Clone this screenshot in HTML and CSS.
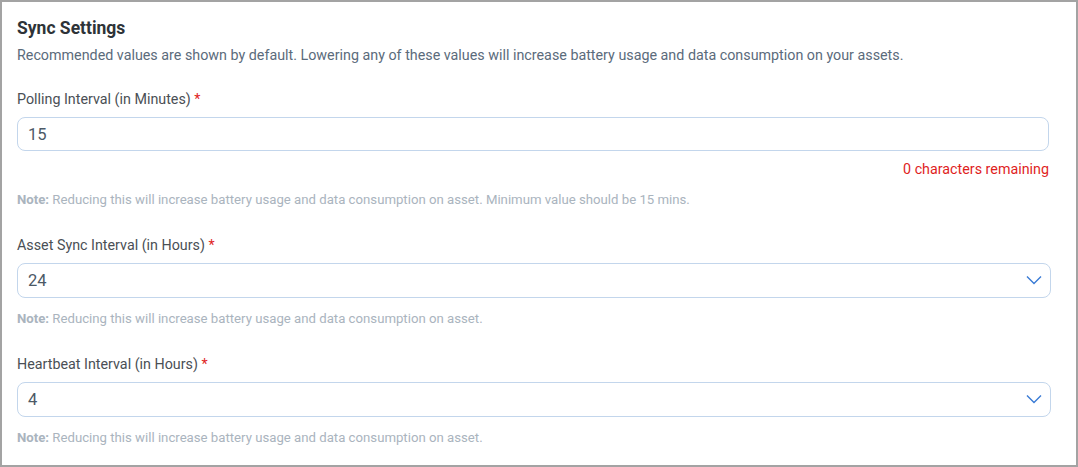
FILE: index.html
```html
<!DOCTYPE html>
<html>
<head>
<meta charset="utf-8">
<link rel="stylesheet" href="styles.css">
</head>
<body>
<div class="panel">
  <h2 class="title">Sync Settings</h2>
  <p class="desc">Recommended values are shown by default. Lowering any of these values will increase battery usage and data consumption on your assets.</p>

  <div class="field">
    <label class="label">Polling Interval (in Minutes) <span class="req">*</span></label>
    <div class="input text-input">15</div>
    <div class="remaining">0 characters remaining</div>
    <div class="note note-first"><b>Note:</b> Reducing this will increase battery usage and data consumption on asset. Minimum value should be 15 mins.</div>
  </div>

  <div class="field">
    <label class="label">Asset Sync Interval (in Hours) <span class="req">*</span></label>
    <div class="input select">
      <span>24</span>
      <svg class="chev" width="16" height="10" viewBox="0 0 16 10"><path d="M1 1.5 L8 8.5 L15 1.5" fill="none" stroke="#3a7bd5" stroke-width="1.4"/></svg>
    </div>
    <div class="note"><b>Note:</b> Reducing this will increase battery usage and data consumption on asset.</div>
  </div>

  <div class="field">
    <label class="label">Heartbeat Interval (in Hours) <span class="req">*</span></label>
    <div class="input select">
      <span>4</span>
      <svg class="chev" width="16" height="10" viewBox="0 0 16 10"><path d="M1 1.5 L8 8.5 L15 1.5" fill="none" stroke="#3a7bd5" stroke-width="1.4"/></svg>
    </div>
    <div class="note"><b>Note:</b> Reducing this will increase battery usage and data consumption on asset.</div>
  </div>
</div>
</body>
</html>
```

FILE: styles.css
```css
html, body {
  margin: 0;
  padding: 0;
  background: #fff;
}
body {
  font-family: Roboto, "Noto Sans", Arial, sans-serif;
}
.panel {
  box-sizing: border-box;
  width: 1078px;
  height: 467px;
  border: 2px solid #a3a3a3;
  padding: 16px 25px 0 15px;
}
.title {
  margin: 0;
  font-size: 17.5px;
  font-weight: 700;
  line-height: 20px;
  color: #2e3338;
}
.desc {
  margin: 9px 0 0;
  font-size: 14.3px;
  line-height: 17px;
  color: #5b6b7b;
}
.field {
  display: flex;
  flex-direction: column;
}
.label {
  display: block;
  margin-top: 27px;
  font-size: 14.3px;
  line-height: 17px;
  color: #4a4f55;
}
.field + .field .label {
  margin-top: 28.5px;
}
.req {
  color: #e02424;
}
.input {
  box-sizing: border-box;
  margin-top: 9px;
  height: 35.5px;
  border: 1px solid #c3d6ec;
  border-radius: 8px;
  padding: 0 10px;
  font-size: 16.5px;
  color: #4c5966;
  display: flex;
  align-items: center;
}
.text-input {
  margin-right: 2px;
  height: 34px;
}
.select {
  justify-content: space-between;
  padding-right: 8px;
}
.chev {
  display: block;
}
.remaining {
  margin-top: 10px;
  margin-right: 2px;
  text-align: right;
  font-size: 14.3px;
  line-height: 17px;
  color: #e01e1e;
}
.note {
  margin-top: 13px;
  font-size: 13.2px;
  line-height: 16px;
  color: #aab4be;
}
.note b {
  font-weight: 700;
}
.note-first {
  margin-top: 14px;
}
```
